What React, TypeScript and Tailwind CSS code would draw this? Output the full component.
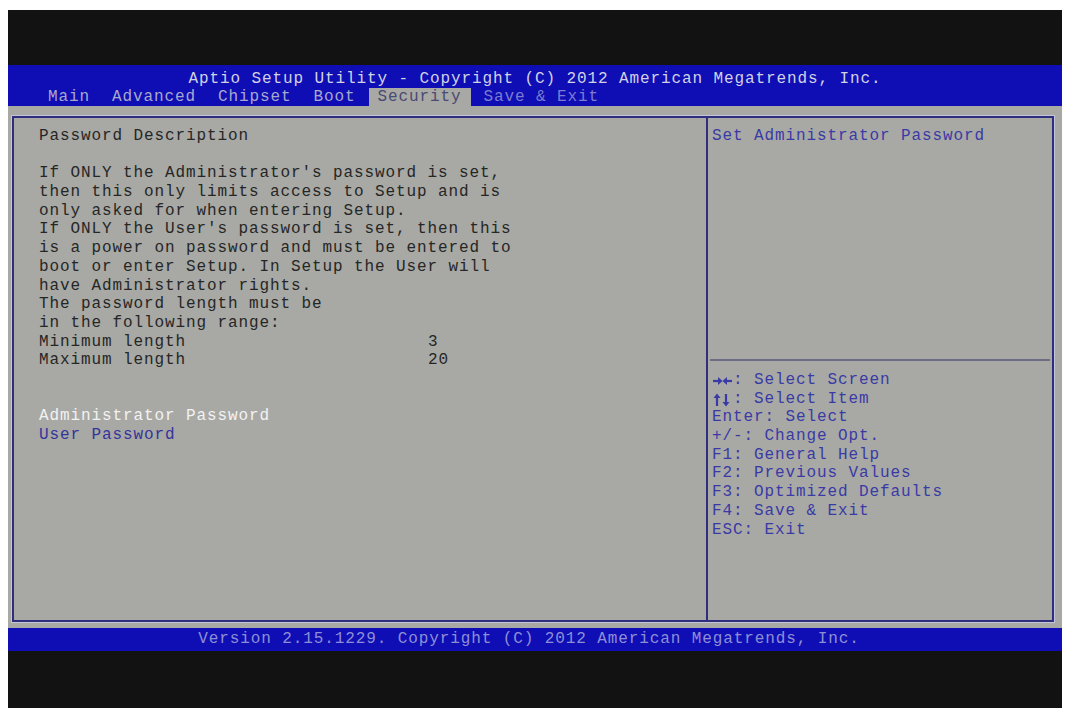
import React from "react";

const mono = "font-['Liberation_Mono','DejaVu_Sans_Mono',monospace] text-[16px] tracking-[0.9px] leading-[18.7px]";

const tabs = ["Main", "Advanced", "Chipset", "Boot", "Security", "Save & Exit"];

const description = [
  "Password Description",
  "",
  "If ONLY the Administrator's password is set,",
  "then this only limits access to Setup and is",
  "only asked for when entering Setup.",
  "If ONLY the User's password is set, then this",
  "is a power on password and must be entered to",
  "boot or enter Setup. In Setup the User will",
  "have Administrator rights.",
  "The password length must be",
  "in the following range:",
];

const limits = [
  ["Minimum length", "3"],
  ["Maximum length", "20"],
];

// bold arrow pairs used in the key legend
const LeftRight = () => (
  <svg width="21" height="14" viewBox="0 0 21 14" className="mt-[3px]" fill="currentColor" stroke="currentColor">
    <line x1="1" y1="7" x2="8" y2="7" strokeWidth="2.2" />
    <polygon points="6,3 10.5,7 6,11" stroke="none" />
    <polygon points="15,3 10.5,7 15,11" stroke="none" />
    <line x1="13" y1="7" x2="20" y2="7" strokeWidth="2.2" />
  </svg>
);

const UpDown = () => (
  <svg width="21" height="14" viewBox="0 0 21 14" className="mt-[3px]" fill="currentColor" stroke="currentColor">
    <line x1="5" y1="4" x2="5" y2="13" strokeWidth="2.2" />
    <polygon points="1.5,5 5,0.5 8.5,5" stroke="none" />
    <line x1="14" y1="1" x2="14" y2="10" strokeWidth="2.2" />
    <polygon points="10.5,9 14,13.5 17.5,9" stroke="none" />
  </svg>
);

const keys: [React.ReactNode, string][] = [
  [<LeftRight />, ": Select Screen"],
  [<UpDown />, ": Select Item"],
  ["Enter", ": Select"],
  ["+/-", ": Change Opt."],
  ["F1", ": General Help"],
  ["F2", ": Previous Values"],
  ["F3", ": Optimized Defaults"],
  ["F4", ": Save & Exit"],
  ["ESC", ": Exit"],
];

const App = () => {
  return (
    <div className="w-[1070px] h-[715px] bg-white pl-[8px] pr-[8px] pt-[10px] pb-[7px]">
      <main className={`flex flex-col h-full bg-[#121212] ${mono}`}>
        {/* black top margin of the monitor */}
        <div className="h-[55px] shrink-0" />

        {/* title bar + tabs */}
        <header className="h-[41px] shrink-0 bg-[#0e0eb4] pt-[5px]">
          <div className="h-[18px] text-center text-[#d2d2e4]">
            Aptio Setup Utility - Copyright (C) 2012 American Megatrends, Inc.
          </div>
          <nav className="flex h-[18px] pl-[29px]">
            {tabs.map((t) =>
              t === "Security" ? (
                <span key={t} className="px-[9px] mx-[2px] bg-[#a8a9a4] text-[#4a4a72]">
                  {t}
                </span>
              ) : (
                <span
                  key={t}
                  className={`px-[11px] ${t === "Save & Exit" ? "text-[#7c7cd0]" : "text-[#a8a8cc]"}`}
                >
                  {t}
                </span>
              )
            )}
          </nav>
        </header>

        {/* body */}
        <section className="h-[522px] shrink-0 bg-[#a8a9a4] pl-[4px] pr-[8px] pt-[10px] pb-[6px]">
          <div className="flex h-full border-2 border-[#2e2e7c] shadow-[0_0_0_1px_#c4c4da]">
            {/* left: item list */}
            <div className="w-[692px] shrink-0 pl-[25px] pt-[9px] text-[#262626] whitespace-pre">
              {description.map((line, i) => (
                <div key={i} className="h-[18.7px]">
                  {line}
                </div>
              ))}
              {limits.map(([label, value]) => (
                <div key={label} className="flex h-[18.7px]">
                  <span className="w-[389px]">{label}</span>
                  <span>{value}</span>
                </div>
              ))}
              <div className="h-[18.7px]" />
              <div className="h-[18.7px]" />
              <div className="h-[18.7px] text-[#f2f2f2]">Administrator Password</div>
              <div className="h-[18.7px] text-[#34349c]">User Password</div>
            </div>

            {/* right: help pane */}
            <div className="flex flex-col flex-1 border-l-2 border-[#2e2e7c] text-[#3a3aa6]">
              <div className="h-[241px] pl-[4px] pt-[9px]">Set Administrator Password</div>
              <div className="mx-[2px] h-[2px] bg-[#6c6c84]" />
              <div className="pl-[4px] pt-[10px]">
                {keys.map(([k, text]) => (
                  <div key={text} className="flex h-[18.7px] whitespace-pre">
                    <span className="flex">{k}</span>
                    <span>{text}</span>
                  </div>
                ))}
              </div>
            </div>
          </div>
        </section>

        {/* version bar */}
        <footer className="h-[23px] shrink-0 bg-[#0e0eb4] pt-[2px] pr-[12px] text-center text-[#8e8ed6]">
          Version 2.15.1229. Copyright (C) 2012 American Megatrends, Inc.
        </footer>

        <div className="flex-1" />
      </main>
    </div>
  );
};

export default App;
